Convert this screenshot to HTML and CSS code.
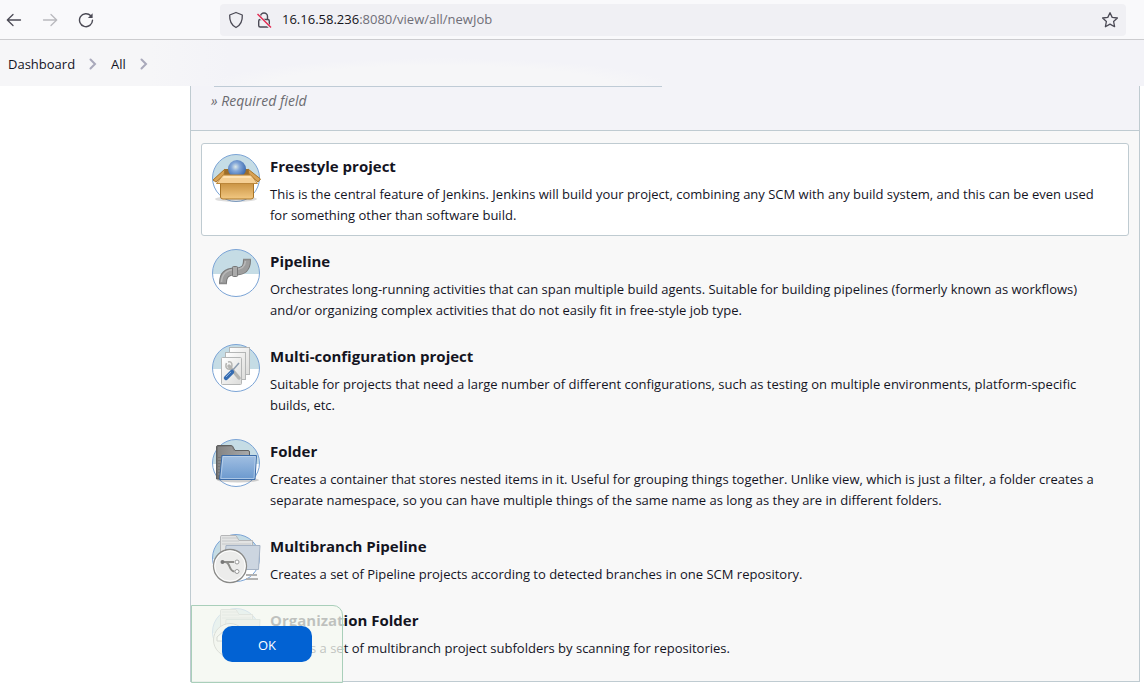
FILE: index.html
```html
<!DOCTYPE html>
<html lang="en">
<head>
<meta charset="utf-8">
<title>New Item - Jenkins</title>
<link rel="stylesheet" href="styles.css">
</head>
<body>
<svg class="defs" aria-hidden="true">
  <defs>
    <linearGradient id="sky" x1="0" y1="0" x2="0" y2="1"><stop offset=".52" stop-color="#c5dce5"/><stop offset=".52" stop-color="#fff"/></linearGradient>
    <radialGradient id="ball" cx=".42" cy=".38" r=".6"><stop offset="0" stop-color="#dce8e8"/><stop offset=".4" stop-color="#82a6d8"/><stop offset="1" stop-color="#3d6bb0"/></radialGradient>
    <linearGradient id="box" x1="0" y1="0" x2="0" y2="1"><stop offset="0" stop-color="#c78f3e"/><stop offset="1" stop-color="#f2c882"/></linearGradient>
    <linearGradient id="paper" x1="0" y1="0" x2="1" y2="1"><stop offset="0" stop-color="#fff"/><stop offset="1" stop-color="#dcdcda"/></linearGradient>
    <linearGradient id="blue" x1="0" y1="0" x2="0" y2="1"><stop offset="0" stop-color="#a1bfe2"/><stop offset="1" stop-color="#6b99ce"/></linearGradient>
    <linearGradient id="gray" x1="0" y1="0" x2="1" y2="0"><stop offset="0" stop-color="#707070"/><stop offset="1" stop-color="#a8a8a8"/></linearGradient>
  </defs>
</svg>

<header class="toolbar">
  <nav class="history">
    <button type="button" aria-label="Back"><svg width="16" height="16" viewBox="0 0 16 16" fill="none" stroke="#4b4a55" stroke-width="1.3" stroke-linecap="round" stroke-linejoin="round"><path d="M14.5 8H1.5M7 2.5L1.3 8L7 13.500"/></svg></button>
    <button type="button" aria-label="Forward" disabled><svg width="16" height="16" viewBox="0 0 16 16" fill="none" stroke="#b9b9be" stroke-width="1.3" stroke-linecap="round" stroke-linejoin="round"><path d="M1.500 8H14.500M9 2.500L14.700 8L9 13.500"/></svg></button>
    <button type="button" aria-label="Reload"><svg width="16" height="16" viewBox="0 0 16 16" fill="none" stroke="#4b4a55" stroke-width="1.400" stroke-linecap="round"><path d="M12.800 3.800A6.500 6.500 0 1 0 14.500 8.300"/><path d="M14.600 1.300V6H9.900Z" fill="#4b4a55" stroke="none"/></svg></button>
  </nav>
  <div class="urlbar">
    <svg width="16" height="18" viewBox="0 0 16 18" fill="none" stroke="#4b4a55" stroke-width="1.300" stroke-linejoin="round"><path d="M8 1.500L14.300 4C14.600 9.500 13 14 8 16.500C3 14 1.400 9.500 1.700 4Z"/></svg>
    <svg width="16" height="18" viewBox="0 0 16 18" fill="none" stroke="#4b4a55" stroke-width="1.400"><rect x="2.700" y="8.500" width="10.600" height="7.500" rx="1.500"/><path d="M4.500 8.500V5.500A3.500 3.500 0 0 1 11.500 5.500V8.500"/><path d="M1.500 3.500L15 17" stroke="#f0f0f4" stroke-width="3"/><path d="M1.500 3L15 16.500" stroke="#e22850"/></svg>
    <span class="url">16.16.58.236<span class="url-path">:8080/view/all/newJob</span></span>
    <button type="button" aria-label="Bookmark this page"><svg width="18" height="18" viewBox="0 0 18 18" fill="none" stroke="#4b4a55" stroke-width="1.300" stroke-linejoin="round"><path d="M9 1.700L11.200 6.400L16.400 7L12.600 10.500L13.600 15.700L9 13.100L4.400 15.700L5.400 10.500L1.600 7L6.800 6.400Z"/></svg></button>
  </div>
</header>

<nav class="breadcrumbs" aria-label="Breadcrumb">
  <a href="#">Dashboard</a>
  <svg width="8" height="12" viewBox="0 0 8 12"><path d="M1.500 1.500L6 6L1.500 10.500"/></svg>
  <a href="#" class="current">All</a>
  <svg width="8" height="12" viewBox="0 0 8 12"><path d="M1.500 1.500L6 6L1.500 10.500"/></svg>
</nav>

<main class="page">
  <form class="panel">
    <div class="name-field">
      <p class="required">» Required field</p>
    </div>
    <ul class="items">
      <li class="item selected">
        <svg class="icon" viewBox="0 0 48 48">
          <circle cx="24" cy="24" r="23.500" fill="#c5dce5"/>
          <path d="M1 25H47A23 23 0 0 1 1 25Z" fill="#fff"/>
          <circle cx="24" cy="24" r="23.500" fill="none" stroke="#7ba4d6"/>
          <ellipse cx="24" cy="45" rx="21" ry="3" fill="#777" opacity=".25"/>
          <path d="M13 15H36L42 23H7Z" fill="#9b6d2c"/>
          <circle cx="25" cy="15" r="9" fill="url(#ball)"/>
          <path d="M13 15L1 26L4 28L12 21ZM36 15L48.500 25L46 28L37 20Z" fill="#d9a254" stroke="#a87427"/>
          <path d="M8.500 28H41.500V43Q41.500 45 39 45H11Q8.500 45 8.500 43Z" fill="url(#box)" stroke="#a87427"/>
          <path d="M11 21H39L45.500 29.500H4.500Z" fill="#f5cf94" stroke="#bc873b"/>
          <path d="M12 22H38L39.500 24H10.500Z" fill="#ffe2b3"/>
        </svg>
        <label class="text"><span class="title">Freestyle project</span><span class="desc">This is the central feature of Jenkins. Jenkins will build your project, combining any SCM with any build system, and this can be even used for something other than software build.</span></label>
      </li>
      <li class="item">
        <svg class="icon" viewBox="0 0 48 48">
          <circle cx="24" cy="24" r="23.500" fill="url(#sky)" stroke="#7ba4d6"/>
          <path d="M11 34C11 25 16 22.500 23 22.500C30 22.500 35 21 35 11" fill="none" stroke="#777" stroke-width="8"/>
          <path d="M11 34C11 25 16 22.500 23 22.500C30 22.500 35 21 35 11" fill="none" stroke="#9d9d9d" stroke-width="6"/>
          <path d="M9.500 33C10 24 16 20.500 23 20.500C29 20.500 33 18 33.500 12" fill="none" stroke="#b9b9b9" stroke-width="1.500"/>
          <path d="M7 34.500H15M31 10.500H39" stroke="#888" stroke-width="1.500"/>
          <rect x="20.500" y="17.500" width="5" height="10" rx="1" fill="#aaa" stroke="#777"/>
        </svg>
        <label class="text"><span class="title">Pipeline</span><span class="desc">Orchestrates long-running activities that can span multiple build agents. Suitable for building pipelines (formerly known as workflows) and/or organizing complex activities that do not easily fit in free-style job type.</span></label>
      </li>
      <li class="item">
        <svg class="icon" viewBox="0 0 48 48">
          <circle cx="24" cy="24" r="23.500" fill="url(#sky)" stroke="#7ba4d6"/>
          <g fill="url(#paper)" stroke="#b4b6b6"><rect x="17.500" y="3.500" width="20" height="27"/><rect x="13.500" y="8.500" width="20" height="27"/><rect x="9.500" y="13.500" width="20" height="27" rx="1"/></g>
          <path d="M17 22L27 34" stroke="#b5b5b2" stroke-width="3.500" stroke-linecap="round"/>
          <path d="M14.500 19C12.500 24 16 26 19 25M16 18C20 17 21 21 19 24" fill="none" stroke="#b5b5b2" stroke-width="1.500"/>
          <path d="M20 27L27 19" stroke="#8c9cae" stroke-width="1.500"/>
          <path d="M14 34L20 28" stroke="#356cb2" stroke-width="4.500" stroke-linecap="round"/><path d="M14 33L19 28" stroke="#89acd8"/>
        </svg>
        <label class="text"><span class="title">Multi-configuration project</span><span class="desc">Suitable for projects that need a large number of different configurations, such as testing on multiple environments, platform-specific builds, etc.</span></label>
      </li>
      <li class="item">
        <svg class="icon" viewBox="0 0 48 48">
          <circle cx="24" cy="24" r="23.500" fill="url(#sky)" stroke="#7ba4d6"/>
          <ellipse cx="26" cy="41" rx="21" ry="2.500" fill="#777" opacity=".35"/>
          <path d="M4.500 40V8Q4.500 6.500 6 6.500H19Q21 6.500 21.500 9L23 11.500H36Q37.500 11.500 37.500 13V40Z" fill="url(#gray)" stroke="#606060"/>
          <path d="M6 9H20M6 11H21M6 13H36M6 15H36M6 17H9M6 20H9M6 23H9M6 26H8M6 29H8M6 32H8M6 35H8" stroke="#b0b0b0" opacity=".6"/>
          <path d="M10 16.500H44.500L43 40.500H7.500Z" fill="url(#blue)" stroke="#3c6ca9" stroke-linejoin="round"/>
          <path d="M11 17.500H43.300L42 39.500H8.800Z" fill="none" stroke="#c4d8ee" opacity=".7"/>
        </svg>
        <label class="text"><span class="title">Folder</span><span class="desc">Creates a container that stores nested items in it. Useful for grouping things together. Unlike view, which is just a filter, a folder creates a separate namespace, so you can have multiple things of the same name as long as they are in different folders.</span></label>
      </li>
      <li class="item">
        <svg class="icon" viewBox="0 0 48 48">
          <circle cx="24" cy="24" r="23.500" fill="url(#sky)" stroke="#7ba4d6"/>
          <path d="M8.500 34V2.500Q8.500 1.500 10 1.500H24L27 6.500H40.500V30H8.500Z" fill="#e3e4e4" stroke="#b5b6b8"/>
          <path d="M10 4H25M10 7H27M10 10H39" stroke="#c6c8ca"/>
          <path d="M34 41H45M34 45H46" stroke="#b2b2b2" stroke-width="2" fill="none"/>
          <path d="M14 11.500H48L46.500 35.500H12Z" fill="#ccd5e0" stroke="#a5b2c4"/>
          <circle cx="18" cy="32" r="16.500" fill="#ececeb" stroke="#8a8a88" stroke-width="1.300"/><circle cx="18" cy="32" r="15.200" fill="none" stroke="#fff"/>
          <path d="M11 28H22M13 28C19 28 16 37 22.500 37.500" fill="none" stroke="#8d8d8a" stroke-width="2"/>
          <circle cx="10.500" cy="28" r="2" fill="#777"/><circle cx="25" cy="28" r="2" fill="#fff" stroke="#999"/><circle cx="25" cy="37.500" r="2" fill="#fff" stroke="#999"/>
        </svg>
        <label class="text"><span class="title">Multibranch Pipeline</span><span class="desc">Creates a set of Pipeline projects according to detected branches in one SCM repository.</span></label>
      </li>
      <li class="item">
        <svg class="icon" viewBox="0 0 48 48">
          <circle cx="24" cy="24" r="23.500" fill="url(#sky)" stroke="#7ba4d6"/>
          <path d="M8.500 34V2.500Q8.500 1.500 10 1.500H24L27 6.500H40.500V30H8.500Z" fill="#dededc" stroke="#a5a6a8"/>
          <path d="M10 4H25M10 7H27M10 10H39" stroke="#b6b8ba"/>
          <path d="M14 11.500H48L46.500 35.500H12Z" fill="#d5d8d8" stroke="#a5b2b4"/>
          <circle cx="18" cy="32" r="16.500" fill="#ececeb" stroke="#8a8a88"/>
          <path d="M5 33V29L13 22H23L31 29V33Z" fill="#fff" stroke="#777"/>
        </svg>
        <label class="text"><span class="title">Organization Folder</span><span class="desc">Creates a set of multibranch project subfolders by scanning for repositories.</span></label>
      </li>
    </ul>
    <div class="footer"><button type="submit">OK</button></div>
  </form>
</main>
</body>
</html>
```

FILE: styles.css
```css
* { box-sizing: border-box; }

body {
  margin: 0;
  min-height: 100vh;
  overflow: hidden;
  background: #fff;
  color: #14141f;
  font-family: "Open Sans", "Noto Sans", sans-serif;
  font-size: 13px;
  line-height: 21px;
}

button {
  border: 0;
  padding: 0;
  background: none;
  font: inherit;
}

svg { display: block; flex: none; }

.defs { position: absolute; width: 0; height: 0; }

.toolbar {
  display: flex;
  align-items: center;
  gap: 126px;
  height: 40px;
  padding: 0 18px 0 6px;
  background: #f9f9fb;
  border-bottom: 1px solid #cccccf;
}

.history { display: flex; gap: 20px; }

.urlbar {
  flex: 1;
  display: flex;
  align-items: center;
  gap: 12px;
  height: 32px;
  padding: 0 7px 0 8px;
  border-radius: 4px;
  background: #f0f0f4;
}

.url { flex: 1; margin-left: -2px; color: #15141a; }
.url-path { color: #6f6e77; }

.breadcrumbs {
  display: flex;
  align-items: center;
  gap: 14px;
  height: 46px;
  padding: 2px 8px 0;
  background:
    radial-gradient(closest-side, #f6f6f8 75%, transparent) 205px 18px / 470px 60px no-repeat,
    linear-gradient(90deg, #f6f6f8 150px, #f3f3f8 230px);
}

.breadcrumbs a { color: #14141f; text-decoration: none; }
.breadcrumbs path { fill: none; stroke: #a9a9bb; stroke-width: 2; stroke-linecap: round; }

.page { padding: 0 4px 0 190px; }

.panel {
  position: relative;
  border: 1px solid #bfcbd1;
  border-top: 0;
  background: #f8f8f8;
}

.name-field {
  height: 45px;
  padding: 0 20px;
  background: #f3f3f8;
  border-bottom: 1px solid #bfcbd1;
}

.name-field::before {
  content: "";
  display: block;
  width: calc(50% - 6px);
  margin-left: 3px;
  border-top: 1px solid #bfcbd6;
}

.required {
  margin: 3px 0 0;
  color: #6b6b70;
  font-size: 14px;
  font-style: italic;
}

.items {
  display: flex;
  flex-direction: column;
  gap: 2px;
  margin: 0;
  padding: 12px 10px;
  list-style: none;
}

.item {
  display: flex;
  gap: 10px;
  padding: 10px 18px 9px 10px;
  border: 1px solid transparent;
  border-radius: 3px;
}

.selected { background: #fff; border-color: #bfcbd1; }

.icon { width: 48px; height: 48px; overflow: visible; }

.title {
  display: block;
  margin-bottom: 6px;
  font-size: 15px;
  font-weight: 700;
  line-height: 24px;
}

.desc { display: block; }

.footer {
  position: absolute;
  left: 0;
  bottom: -2px;
  padding: 20px 30px;
  border: 1px solid #a9cfba;
  border-radius: 0 10px 0 0;
  background: rgba(245, 249, 240, .76);
}

.footer button {
  display: block;
  width: 90px;
  height: 36px;
  padding-top: 2px;
  border-radius: 10px;
  background: #0262d3;
  color: #fff;
}
```
